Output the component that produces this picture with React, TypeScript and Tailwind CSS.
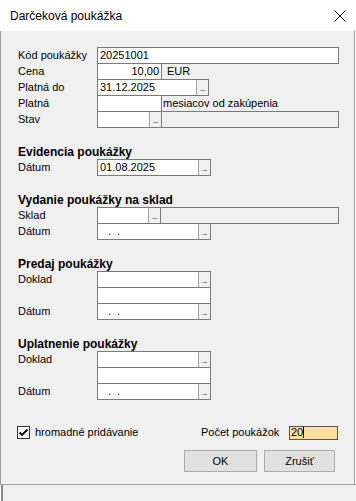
import React from "react";

const Btn = () => (
  <div className="w-[12px] shrink-0 border-l border-[#a0a0a0] bg-[#f0f0f0] flex items-end justify-center pb-[2px]">
    <span className="text-[8px] leading-[8px] tracking-[-0.5px] text-black">...</span>
  </div>
);

type BoxProps = {
  w: string;
  children?: React.ReactNode;
  btn?: boolean;
  gray?: boolean;
  right?: boolean;
  extra?: string;
};

const Box = ({ w, children, btn, gray, right, extra = "" }: BoxProps) => (
  <div
    className={`${w} h-[17px] flex border border-[#7a7a7a] ${gray ? "bg-[#f0f0f0]" : "bg-white"} ${extra}`}
  >
    <div
      className={`flex-1 flex items-center whitespace-pre ${right ? "justify-end pr-[2px]" : "pl-[2px]"}`}
    >
      {children}
    </div>
    {btn && <Btn />}
  </div>
);

const Dots = () => (
  <span className="flex">
    <span className="ml-[8px]">.</span>
    <span className="ml-[6px]">.</span>
  </span>
);

const Row = ({
  label,
  first,
  children,
}: {
  label?: string;
  first?: boolean;
  children: React.ReactNode;
}) => (
  <div className={`flex h-[17px] items-stretch ${first ? "" : "-mt-px"}`}>
    <div className="w-[79px] shrink-0 flex items-center">{label}</div>
    {children}
  </div>
);

const Heading = ({ children }: { children: React.ReactNode }) => (
  <div className="mt-[18px] h-[13px] leading-[13px] font-bold text-[12px]">{children}</div>
);

export default function App() {
  return (
    <div
      className="w-[356px] h-[501px] bg-white text-black text-[11px] overflow-hidden"
      style={{ fontFamily: '"Liberation Sans", Arial, sans-serif' }}
    >
      {/* title bar */}
      <div className="h-[31px] flex items-center justify-between pl-[10px] pr-[10px]">
        <span className="text-[12px]">Darčeková poukážka</span>
        <svg width="12" height="12" viewBox="0 0 12 12">
          <path d="M0.5 0.5 L11.5 11.5 M11.5 0.5 L0.5 11.5" stroke="#111" strokeWidth="1" />
        </svg>
      </div>

      {/* body */}
      <div className="h-[453px] w-[355px] bg-[#f0f0f0] border-l border-r border-[#a0a0a0] pl-[17px] pt-[16px] flex flex-col">
        <Row label="Kód poukážky" first>
          <Box w="w-[242px]">20251001</Box>
        </Row>
        <Row label="Cena">
          <Box w="w-[65px]" right>
            10,00
          </Box>
          <div className="flex items-center pl-[5px]">EUR</div>
        </Row>
        <Row label="Platná do">
          <Box w="w-[112px]" btn>
            31.12.2025
          </Box>
        </Row>
        <Row label="Platná">
          <Box w="w-[65px]" />
          <div className="flex items-center pl-[1px]">mesiacov od zakúpenia</div>
        </Row>
        <Row label="Stav">
          <Box w="w-[65px]" btn />
          <Box w="w-[178px]" gray extra="-ml-px" />
        </Row>

        <Heading>Evidencia poukážky</Heading>
        <Row label="Dátum" first>
          <Box w="w-[114px]" btn>
            01.08.2025
          </Box>
        </Row>

        <Heading>Vydanie poukážky na sklad</Heading>
        <Row label="Sklad" first>
          <Box w="w-[64px]" btn />
          <Box w="w-[179px]" gray extra="-ml-px" />
        </Row>
        <Row label="Dátum">
          <Box w="w-[114px]" btn>
            <Dots />
          </Box>
        </Row>

        <Heading>Predaj poukážky</Heading>
        <Row label="Doklad" first>
          <Box w="w-[114px]" btn />
        </Row>
        <Row>
          <Box w="w-[114px]" />
        </Row>
        <Row label="Dátum">
          <Box w="w-[114px]" btn>
            <Dots />
          </Box>
        </Row>

        <Heading>Uplatnenie poukážky</Heading>
        <Row label="Doklad" first>
          <Box w="w-[114px]" btn />
        </Row>
        <Row>
          <Box w="w-[114px]" />
        </Row>
        <Row label="Dátum">
          <Box w="w-[114px]" btn>
            <Dots />
          </Box>
        </Row>

        {/* checkbox row */}
        <div className="mt-[24px] h-[17px] flex items-center">
          <div className="-ml-px w-[13px] h-[13px] border border-[#333] bg-white flex items-center justify-center">
            <svg width="11" height="11" viewBox="0 0 11 11">
              <path d="M1.5 5.5 L4 8 L9.5 2.5" stroke="#000" strokeWidth="1.8" fill="none" />
            </svg>
          </div>
          <span className="ml-[5px] w-[166px]">hromadné pridávanie</span>
          <span className="w-[88px]">Počet poukážok</span>
          <div className="w-[49px] h-[14px] border border-[#555] bg-[#ffdd9c] flex items-center pl-[1px]">
            <span>20</span>
            <span className="w-px h-[11px] bg-black" />
          </div>
        </div>

        {/* buttons */}
        <div className="mt-[9px] flex pl-[166px] gap-[7px]">
          <div className="w-[73px] h-[22px] border border-[#adadad] bg-[#e1e1e1] flex items-center justify-center">
            OK
          </div>
          <div className="w-[71px] h-[22px] border border-[#adadad] bg-[#e1e1e1] flex items-center justify-center">
            Zrušiť
          </div>
        </div>
      </div>

      {/* bottom strip */}
      <div className="h-px bg-[#a0a0a0]" />
      <div className="h-[16px] bg-[#f0f0f0] border-l-2 border-[#8a8a8a] ml-px" />
    </div>
  );
}
